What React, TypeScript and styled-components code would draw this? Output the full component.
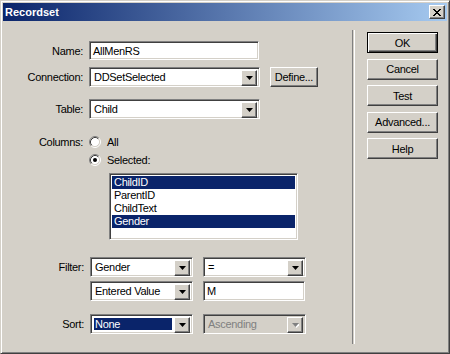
import React from 'react'
import styled, { createGlobalStyle, css } from 'styled-components'

const GlobalStyle = createGlobalStyle`
  html, body {
    margin: 0;
    padding: 0;
    background: #d4d0c8;
  }
  body {
    font-family: "Liberation Sans", Arial, sans-serif;
    font-size: 11px;
    letter-spacing: -0.3px;
    color: #000;
  }
`

const raised = css`
  border: 1px solid;
  border-color: #fff #404040 #404040 #fff;
  box-shadow: inset -1px -1px #808080, inset 1px 1px #d4d0c8;
`

const sunken = css`
  border: 1px solid;
  border-color: #808080 #fff #fff #808080;
  box-shadow: inset 1px 1px #404040, inset -1px -1px #d4d0c8;
`

const Window = styled.div`
  box-sizing: border-box;
  width: 450px;
  height: 354px;
  display: flex;
  flex-direction: column;
  padding: 2px;
  border: 1px solid;
  border-color: #d4d0c8 #404040 #404040 #d4d0c8;
  box-shadow: inset 1px 1px #fff, inset -1px -1px #808080;
  background: #d4d0c8;
`

const TitleBar = styled.div`
  height: 18px;
  display: flex;
  align-items: center;
  justify-content: space-between;
  padding: 0 2px 0 2px;
  background: linear-gradient(to right, #0a246a, #a6caf0);
`

const Title = styled.span`
  color: #fff;
  font-weight: bold;
  font-size: 11px;
  letter-spacing: 0;
`

const CloseButton = styled.div`
  box-sizing: border-box;
  width: 16px;
  height: 14px;
  display: flex;
  align-items: center;
  justify-content: center;
  background: #d4d0c8;
  ${raised}
`

const Body = styled.div`
  flex: 1;
  display: flex;
`

const FormPanel = styled.div`
  width: 349px;
  padding-top: 20px;
  display: flex;
  flex-direction: column;
`

const Separator = styled.div`
  width: 1px;
  margin-top: 9px;
  height: 314px;
  border-left: 1px solid #808080;
  border-right: 1px solid #fff;
`

const ButtonColumn = styled.div`
  display: flex;
  flex-direction: column;
  gap: 5.5px;
  padding: 11px 0 0 12px;
`

const Row = styled.div<{ $top: number; $align?: string }>`
  display: flex;
  align-items: ${p => p.$align || 'center'};
  margin-top: ${p => p.$top}px;
`

const Label = styled.div<{ $width?: number }>`
  width: ${p => p.$width ?? 80}px;
  margin-right: 6px;
  text-align: right;
  flex-shrink: 0;
`

const Gap = styled.span`
  width: 10px;
  flex-shrink: 0;
`

const TextBox = styled.div<{ $width: number; $height?: number }>`
  box-sizing: border-box;
  width: ${p => p.$width}px;
  height: ${p => p.$height ?? 19}px;
  background: #fff;
  padding: 0 3px;
  display: flex;
  align-items: center;
  ${sunken}
`

const SelectBox = styled.div<{ $width: number; $disabled?: boolean }>`
  box-sizing: border-box;
  width: ${p => p.$width}px;
  height: 20px;
  padding: 2px;
  display: flex;
  background: ${p => (p.$disabled ? '#d4d0c8' : '#fff')};
  color: ${p => (p.$disabled ? '#808080' : '#000')};
  ${sunken}
`

const SelectValue = styled.div<{ $selected?: boolean }>`
  flex: 1;
  display: flex;
  align-items: center;
  margin: 1px 2px 1px 1px;
  padding-left: 1px;
  background: ${p => (p.$selected ? '#0a246a' : 'transparent')};
  color: ${p => (p.$selected ? '#fff' : 'inherit')};
`

const DropButton = styled.div`
  box-sizing: border-box;
  width: 16px;
  height: 16px;
  display: flex;
  align-items: center;
  justify-content: center;
  background: #d4d0c8;
  ${raised}
`

const PushButton = styled.div<{ $width: number; $height?: number; $default?: boolean }>`
  box-sizing: border-box;
  width: ${p => p.$width}px;
  height: ${p => p.$height ?? 21}px;
  display: flex;
  align-items: center;
  justify-content: center;
  background: #d4d0c8;
  ${p =>
    p.$default
      ? css`
          border: 1px solid #000;
          box-shadow: inset 1px 1px #fff, inset -1px -1px #404040,
            inset -2px -2px #808080;
        `
      : raised}
`

const DefineButton = styled(PushButton)`
  margin-left: 10px;
`

const Options = styled.div`
  display: flex;
  flex-direction: column;
`

const RadioRow = styled.div<{ $top: number }>`
  display: flex;
  align-items: center;
  height: 12px;
  margin-top: ${p => p.$top}px;
  gap: 6px;
`

const ListBox = styled.div`
  box-sizing: border-box;
  width: 189px;
  height: 67px;
  margin: 7px 0 0 20px;
  padding: 2px;
  background: #fff;
  ${sunken}
`

const ListItem = styled.div<{ $selected?: boolean }>`
  height: 13px;
  line-height: 13px;
  padding-left: 2px;
  background: ${p => (p.$selected ? '#0a246a' : 'transparent')};
  color: ${p => (p.$selected ? '#fff' : '#000')};
`

const Arrow = ({ disabled }: { disabled?: boolean }) => (
  <svg width="7" height="5" viewBox="0 0 7 5">
    {disabled && <polygon points="1,1 8,1 4.5,5" fill="#fff" />}
    <polygon points="0,0 7,0 3.5,4" fill={disabled ? '#808080' : '#000'} />
  </svg>
)

const Select = ({
  value,
  width,
  selected,
  disabled,
}: {
  value: string
  width: number
  selected?: boolean
  disabled?: boolean
}) => (
  <SelectBox $width={width} $disabled={disabled}>
    <SelectValue $selected={selected}>{value}</SelectValue>
    <DropButton>
      <Arrow disabled={disabled} />
    </DropButton>
  </SelectBox>
)

const Radio = ({ checked }: { checked?: boolean }) => (
  <svg width="12" height="12" viewBox="0 0 12 12">
    <circle cx="6" cy="6" r="4.5" fill="#fff" />
    <path d="M2.11 9.89 A5.5 5.5 0 0 1 9.89 2.11" stroke="#808080" fill="none" />
    <path d="M9.89 2.11 A5.5 5.5 0 0 1 2.11 9.89" stroke="#fff" fill="none" />
    <path d="M2.82 9.18 A4.5 4.5 0 0 1 9.18 2.82" stroke="#404040" fill="none" />
    <path d="M9.18 2.82 A4.5 4.5 0 0 1 2.82 9.18" stroke="#d4d0c8" fill="none" />
    {checked && <circle cx="6" cy="6" r="2" fill="#000" />}
  </svg>
)

const columns = [
  { name: 'ChildID', selected: true },
  { name: 'ParentID' },
  { name: 'ChildText' },
  { name: 'Gender', selected: true },
]

const buttons = ['Cancel', 'Test', 'Advanced...', 'Help']

const App = () => {
  return (
    <>
      <GlobalStyle />
      <Window>
        <TitleBar>
          <Title>Recordset</Title>
          <CloseButton>
            <svg width="8" height="7" viewBox="0 0 8 7">
              <path d="M0 0 L7 7 M1 0 L8 7 M7 0 L0 7 M8 0 L1 7" stroke="#000" strokeWidth="1" />
            </svg>
          </CloseButton>
        </TitleBar>
        <Body>
          <FormPanel>
            <Row $top={0}>
              <Label>Name:</Label>
              <TextBox $width={170}>AllMenRS</TextBox>
            </Row>
            <Row $top={7}>
              <Label>Connection:</Label>
              <Select value="DDSetSelected" width={171} />
              <DefineButton $width={48} $height={20}>
                Define...
              </DefineButton>
            </Row>
            <Row $top={12}>
              <Label>Table:</Label>
              <Select value="Child" width={171} />
            </Row>
            <Row $top={17} $align="flex-start">
              <Label>Columns:</Label>
              <Options>
                <RadioRow $top={0}>
                  <Radio />
                  <span>All</span>
                </RadioRow>
                <RadioRow $top={6}>
                  <Radio checked />
                  <span>Selected:</span>
                </RadioRow>
                <ListBox>
                  {columns.map(c => (
                    <ListItem key={c.name} $selected={c.selected}>
                      {c.name}
                    </ListItem>
                  ))}
                </ListBox>
              </Options>
            </Row>
            <Row $top={17}>
              <Label $width={81}>Filter:</Label>
              <Select value="Gender" width={103} />
              <Gap />
              <Select value="=" width={103} />
            </Row>
            <Row $top={4}>
              <Label $width={81} />
              <Select value="Entered Value" width={103} />
              <Gap />
              <TextBox $width={102} $height={20}>
                M
              </TextBox>
            </Row>
            <Row $top={13}>
              <Label $width={81}>Sort:</Label>
              <Select value="None" width={103} selected />
              <Gap />
              <Select value="Ascending" width={103} disabled />
            </Row>
          </FormPanel>
          <Separator />
          <ButtonColumn>
            <PushButton $width={71} $default>
              OK
            </PushButton>
            {buttons.map(b => (
              <PushButton key={b} $width={71}>
                {b}
              </PushButton>
            ))}
          </ButtonColumn>
        </Body>
      </Window>
    </>
  )
}

export default App
